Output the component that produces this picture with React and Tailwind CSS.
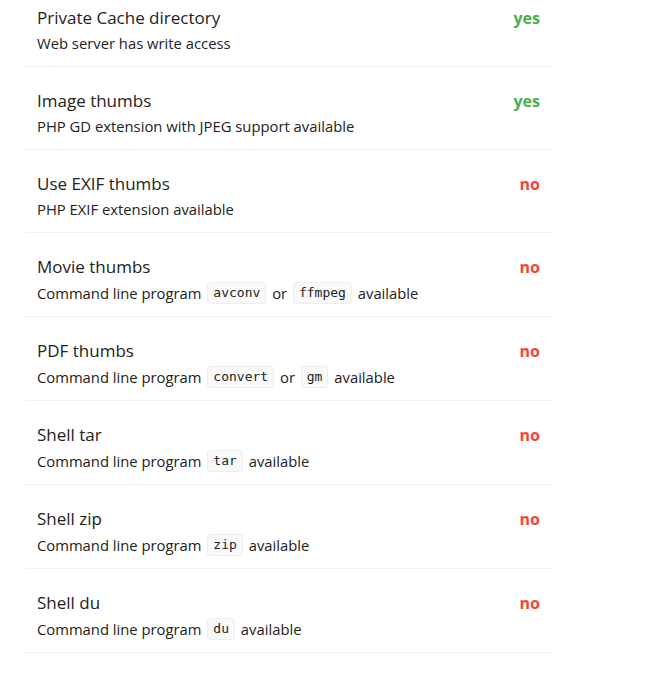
import React from "react";

const rows = [
  { title: "Private Cache directory", desc: ["Web server has write access"], ok: true },
  { title: "Image thumbs", desc: ["PHP GD extension with JPEG support available"], ok: true },
  { title: "Use EXIF thumbs", desc: ["PHP EXIF extension available"], ok: false },
  { title: "Movie thumbs", desc: ["Command line program ", { code: "avconv" }, " or ", { code: "ffmpeg" }, " available"], ok: false },
  { title: "PDF thumbs", desc: ["Command line program ", { code: "convert" }, " or ", { code: "gm" }, " available"], ok: false },
  { title: "Shell tar", desc: ["Command line program ", { code: "tar" }, " available"], ok: false },
  { title: "Shell zip", desc: ["Command line program ", { code: "zip" }, " available"], ok: false },
  { title: "Shell du", desc: ["Command line program ", { code: "du" }, " available"], ok: false },
];

const Code = ({ children }) => (
  <code className="inline-block mx-[2px] px-[5px] leading-[20px] text-[13px] text-[#222] bg-[#f9f9f9] border border-[#eeeeee] rounded-[3px] font-['DejaVu_Sans_Mono',monospace]">
    {children}
  </code>
);

const App = () => {
  return (
    <div className="bg-white min-h-screen font-['Open_Sans',sans-serif] text-[#222]">
      <div className="ml-[25px] w-[527px] -mt-[16px]">
        {rows.map((row) => {
          const hasCode = row.desc.some((d) => typeof d !== "string");
          return (
            <div key={row.title} className="flex justify-between border-b border-[#eeeeee] px-3 pt-[22px] pb-[11px]">
              <div>
                <div className="text-[17px] leading-[24px]">{row.title}</div>
                <div className={`mt-[2px] flex items-center whitespace-pre text-[14.8px] ${hasCode ? "h-[24px]" : "h-[23px]"}`}>
                  {row.desc.map((d, i) =>
                    typeof d === "string" ? <span key={i}>{d}</span> : <Code key={i}>{d.code}</Code>
                  )}
                </div>
              </div>
              <div className={`text-[16px] leading-[24px] font-bold ${row.ok ? "text-[#4caf50]" : "text-[#f44336]"}`}>
                {row.ok ? "yes" : "no"}
              </div>
            </div>
          );
        })}
      </div>
    </div>
  );
};

export default App;
